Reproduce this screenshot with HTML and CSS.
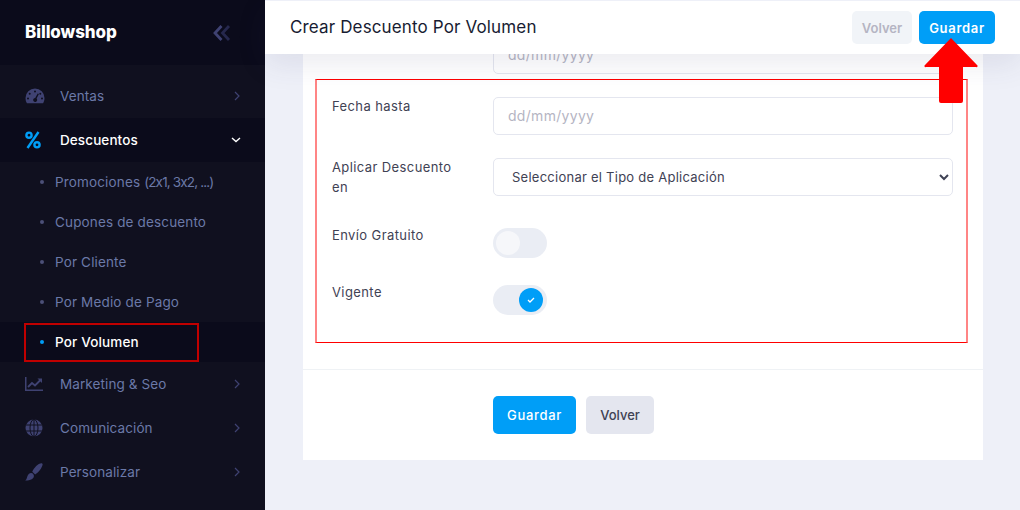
FILE: index.html
```html
<!DOCTYPE html>
<html lang="es">
<head>
<meta charset="utf-8">
<title>Crear Descuento Por Volumen</title>
<link rel="stylesheet" href="styles.css">
</head>
<body>
<div class="app">
  <aside class="sidebar">
    <div class="brand">
      <span class="logo">Billowshop</span>
      <svg class="collapse" width="18" height="16" viewBox="0 0 18 16"><path d="M8.500 1 2 8l6.500 7" fill="none" stroke="#3f4272" stroke-width="2.800"/><path d="M16 1 9.500 8l6.500 7" fill="none" stroke="#26284d" stroke-width="2.800"/></svg>
    </div>
    <nav class="menu">
      <a class="item">
        <svg class="ico" width="20" height="16" viewBox="0 0 20 16"><path fill="#3f4272" fill-rule="evenodd" d="M10 .5a9.500 9.500 0 0 1 9.500 9.500c0 2-.5 3.800-1.400 5.200H1.900A9.400 9.400 0 0 1 .5 10 9.500 9.500 0 0 1 10 .5ZM10 2.600a1 1 0 1 0 0 2 1 1 0 0 0 0-2ZM4.700 4.800a1 1 0 1 0 0 2 1 1 0 0 0 0-2ZM15.300 4.800a1 1 0 1 0 0 2 1 1 0 0 0 0-2ZM3 9.500a1 1 0 1 0 0 2 1 1 0 0 0 0-2ZM17 9.500a1 1 0 1 0 0 2 1 1 0 0 0 0-2ZM12.700 5.400 10.200 10a2 2 0 1 0 1.400.6l2.300-4.700Z"/></svg>
        <span class="label">Ventas</span>
        <svg class="chev" width="6" height="10" viewBox="0 0 6 10"><path d="m1 1 4 4-4 4" fill="none" stroke="#3f4272" stroke-width="1.200"/></svg>
      </a>
      <a class="item active">
        <svg class="ico" width="16" height="18" viewBox="0 0 16 18"><g fill="none" stroke="#009ef7" stroke-width="2.400"><path d="M13.500 1 2.500 17"/><circle cx="4" cy="4.200" r="2.600"/><circle cx="12" cy="13.800" r="2.600"/></g></svg>
        <span class="label">Descuentos</span>
        <svg class="chev-down" width="10" height="6" viewBox="0 0 10 6"><path d="m1 1 4 3.500L9 1" fill="none" stroke="#fff" stroke-width="1.400"/></svg>
      </a>
      <div class="sub">
        <a class="sub-item"><i class="dot"></i>Promociones&nbsp;<span class="tight">(2x1, 3x2, ...)</span></a>
        <a class="sub-item"><i class="dot"></i>Cupones de descuento</a>
        <a class="sub-item"><i class="dot"></i>Por Cliente</a>
        <a class="sub-item"><i class="dot"></i>Por Medio de Pago</a>
        <a class="sub-item current"><i class="dot"></i>Por Volumen</a>
      </div>
      <a class="item">
        <svg class="ico" width="18" height="14" viewBox="0 0 18 14"><path fill="#3f4272" d="M0 0h1.500v12.500H18V14H0Z"/><path d="m3 10 4-4 3 2.500L15.500 3" fill="none" stroke="#3f4272" stroke-width="1.800"/><path fill="#3f4272" d="M12.500 1.500H17V6Z"/></svg>
        <span class="label">Marketing &amp; Seo</span>
        <svg class="chev" width="6" height="10" viewBox="0 0 6 10"><path d="m1 1 4 4-4 4" fill="none" stroke="#3f4272" stroke-width="1.200"/></svg>
      </a>
      <a class="item">
        <svg class="ico" width="18" height="18" viewBox="0 0 18 18"><circle cx="9" cy="9" r="8.500" fill="#3f4272"/><g fill="none" stroke="#10101f"><ellipse cx="9" cy="9" rx="4" ry="8.500"/><path d="M1 6h16M1 12h16M9 .5v17"/></g></svg>
        <span class="label">Comunicación</span>
        <svg class="chev" width="6" height="10" viewBox="0 0 6 10"><path d="m1 1 4 4-4 4" fill="none" stroke="#3f4272" stroke-width="1.200"/></svg>
      </a>
      <a class="item">
        <svg class="ico" width="18" height="18" viewBox="0 0 18 18"><path fill="#3f4272" d="M16.500.3c.7 0 1.300.7 1.100 1.500-.8 3.200-3.600 7.700-7.500 9.600L7.300 8.800C8.900 5 13 .4 16.500.3ZM6.300 10c1.300.1 2.500 1.300 2.600 2.700.2 3-3.100 4.800-8.700 4.800 1.800-1.200 1.600-3 2.400-4.700C3.200 11 4.700 9.900 6.300 10Z"/></svg>
        <span class="label">Personalizar</span>
        <svg class="chev" width="6" height="10" viewBox="0 0 6 10"><path d="m1 1 4 4-4 4" fill="none" stroke="#3f4272" stroke-width="1.200"/></svg>
      </a>
    </nav>
    <div class="mark mark-side"></div>
  </aside>
  <main class="main">
    <header class="topbar">
      <h1>Crear Descuento Por Volumen</h1>
      <div class="actions">
        <button class="btn btn-ghost" type="button">Volver</button>
        <button class="btn btn-primary" type="button">Guardar</button>
      </div>
    </header>
    <div class="content">
      <form class="card">
        <div class="fields">
          <div class="row">
            <input class="control" type="text" placeholder="dd/mm/yyyy">
          </div>
          <div class="row">
            <label class="field-label">Fecha hasta</label>
            <input class="control" type="text" placeholder="dd/mm/yyyy">
          </div>
          <div class="row row-select">
            <label class="field-label">Aplicar Descuento en</label>
            <select class="control select"><option>Seleccionar el Tipo de Aplicación</option></select>
          </div>
          <div class="row row-toggle">
            <label class="field-label">Envío Gratuito</label>
            <span class="toggle"><i class="knob"></i></span>
          </div>
          <div class="row row-toggle">
            <label class="field-label">Vigente</label>
            <span class="toggle on"><i class="knob"><svg width="8" height="6" viewBox="0 0 8 6"><path d="m1 3 2 2 4-4" fill="none" stroke="#fff" stroke-width="1.300"/></svg></i></span>
          </div>
        </div>
        <div class="card-footer">
          <button class="btn btn-primary btn-lg" type="button">Guardar</button>
          <button class="btn btn-light btn-lg" type="button">Volver</button>
        </div>
        <div class="mark mark-form"></div>
      </form>
    </div>
    <svg class="arrow" width="54" height="68" viewBox="0 0 54 68"><path fill="#f00" d="M27 0 53 27a1 1 0 0 1-1 2H39v34a2 2 0 0 1-2 2H17a2 2 0 0 1-2-2V29H2a1 1 0 0 1-1-2Z"/></svg>
  </main>
</div>
</body>
</html>
```
FILE: styles.css
```css
* { box-sizing: border-box; }
html, body { margin: 0; height: 100%; overflow: hidden; }
body { font-family: "Inter", "Liberation Sans", sans-serif; font-size: 13px; font-feature-settings: "calt" 0; color: #3f4254; background: #eef0f8; }
.app { display: flex; height: 510px; }

.sidebar { position: relative; width: 265px; flex: none; background: #10101f; }
.brand { height: 65px; background: #0b0b1b; display: flex; align-items: center; justify-content: space-between; padding: 0 34px 0 25px; }
.logo { color: #fff; font-size: 17px; font-weight: 800; letter-spacing: -.1px; margin-top: -1px; }
.collapse { display: block; }
.menu { display: flex; flex-direction: column; padding-top: 9px; }
.item { height: 44px; display: grid; grid-template-columns: 35px 1fr auto; align-items: center; padding: 0 25px; color: #6b79a8; font-size: 13.500px; letter-spacing: .1px; }
.item.active { background: #0b0b1b; color: #fff; font-weight: 500; }
.ico { display: block; }
.chev-down { margin-right: -1px; }
.sub { display: flex; flex-direction: column; }
.sub-item { height: 40px; display: flex; align-items: center; padding-left: 40px; color: #6b79a8; font-size: 13.500px; letter-spacing: .15px; }
.sub-item .dot { width: 4px; height: 4px; border-radius: 50%; background: #4c5078; margin-right: 11px; }
.tight { letter-spacing: -.85px; }
.sub-item.current { background: #0b0b1b; color: #fff; font-weight: 500; }
.sub-item.current .dot { background: #009ef7; }
.mark { position: absolute; pointer-events: none; }
.mark-side { left: 24px; top: 323px; width: 175px; height: 39px; border: 2px solid #c00000; }

.main { position: relative; flex: 1; min-width: 0; display: flex; flex-direction: column; }
.topbar { position: relative; z-index: 2; height: 54px; flex: none; background: #fff; border-top: 1px solid #eef0f8; display: flex; align-items: center; justify-content: space-between; padding: 0 25px; box-shadow: 0 10px 30px rgba(60, 60, 110, .1); }
.topbar h1 { margin: -1px 0 0; font-size: 17px; font-weight: 400; color: #181c32; letter-spacing: .14px; }
.actions { display: flex; gap: 7px; }
.btn { border: 0; border-radius: 5px; font-family: inherit; font-size: 13px; font-weight: 600; height: 33px; padding: 0; font-feature-settings: "calt" 0; }
.btn-ghost { background: #f1f4f8; color: #b5b5c3; width: 60px; }
.btn-primary { background: #009ef7; color: #fff; width: 76px; letter-spacing: .7px; }
.btn-lg { height: 38px; font-weight: 500; }
.btn-primary.btn-lg { width: 83px; }
.btn-light { background: #e4e6ef; color: #3f4254; width: 68px; }

.content { flex: 1; padding: 0 37px 0 38px; min-height: 0; overflow: hidden; }
.card { position: relative; margin-top: -18px; background: #fff; height: 424px; display: flex; flex-direction: column; }
.fields { height: 333px; padding-left: 190px; }
.row { position: relative; margin-bottom: 23px; }
.row-select { margin-bottom: 32px; }
.row-toggle { height: 30px; margin-bottom: 27px; }
.field-label { position: absolute; left: -161px; top: -1px; width: 130px; color: #3f4254; line-height: 20px; letter-spacing: .4px; }
.row-toggle .field-label { top: -3px; }
.control { display: block; width: 460px; height: 38px; border: 1px solid #e4e6ef; border-radius: 5px; background: #fff; font-family: inherit; font-size: 14px; color: #3f4254; padding: 0 14px 2px; outline: 0; letter-spacing: .3px; }
.control::placeholder { color: #b5b5c3; }
.select { font-size: 13px; letter-spacing: .25px; padding: 0 14px; }
.card-footer { border-top: 1px solid #eff2f5; padding: 26px 0 0 190px; display: flex; gap: 10px; }
.mark-form { left: 12px; top: 43px; width: 653px; height: 264px; border-style: solid; border-color: #f00 #ff8585; border-width: 1px 2px; }

.toggle { display: block; width: 54px; height: 30px; border-radius: 15px; background: #eaedf4; position: relative; }
.knob { position: absolute; top: 3px; left: 3px; width: 24px; height: 24px; border-radius: 50%; background: #f6f7fa; display: flex; align-items: center; justify-content: center; }
.toggle.on .knob { left: auto; right: 4px; background: #009ef7; }
.arrow { position: absolute; z-index: 3; left: 659px; top: 38px; }
```
